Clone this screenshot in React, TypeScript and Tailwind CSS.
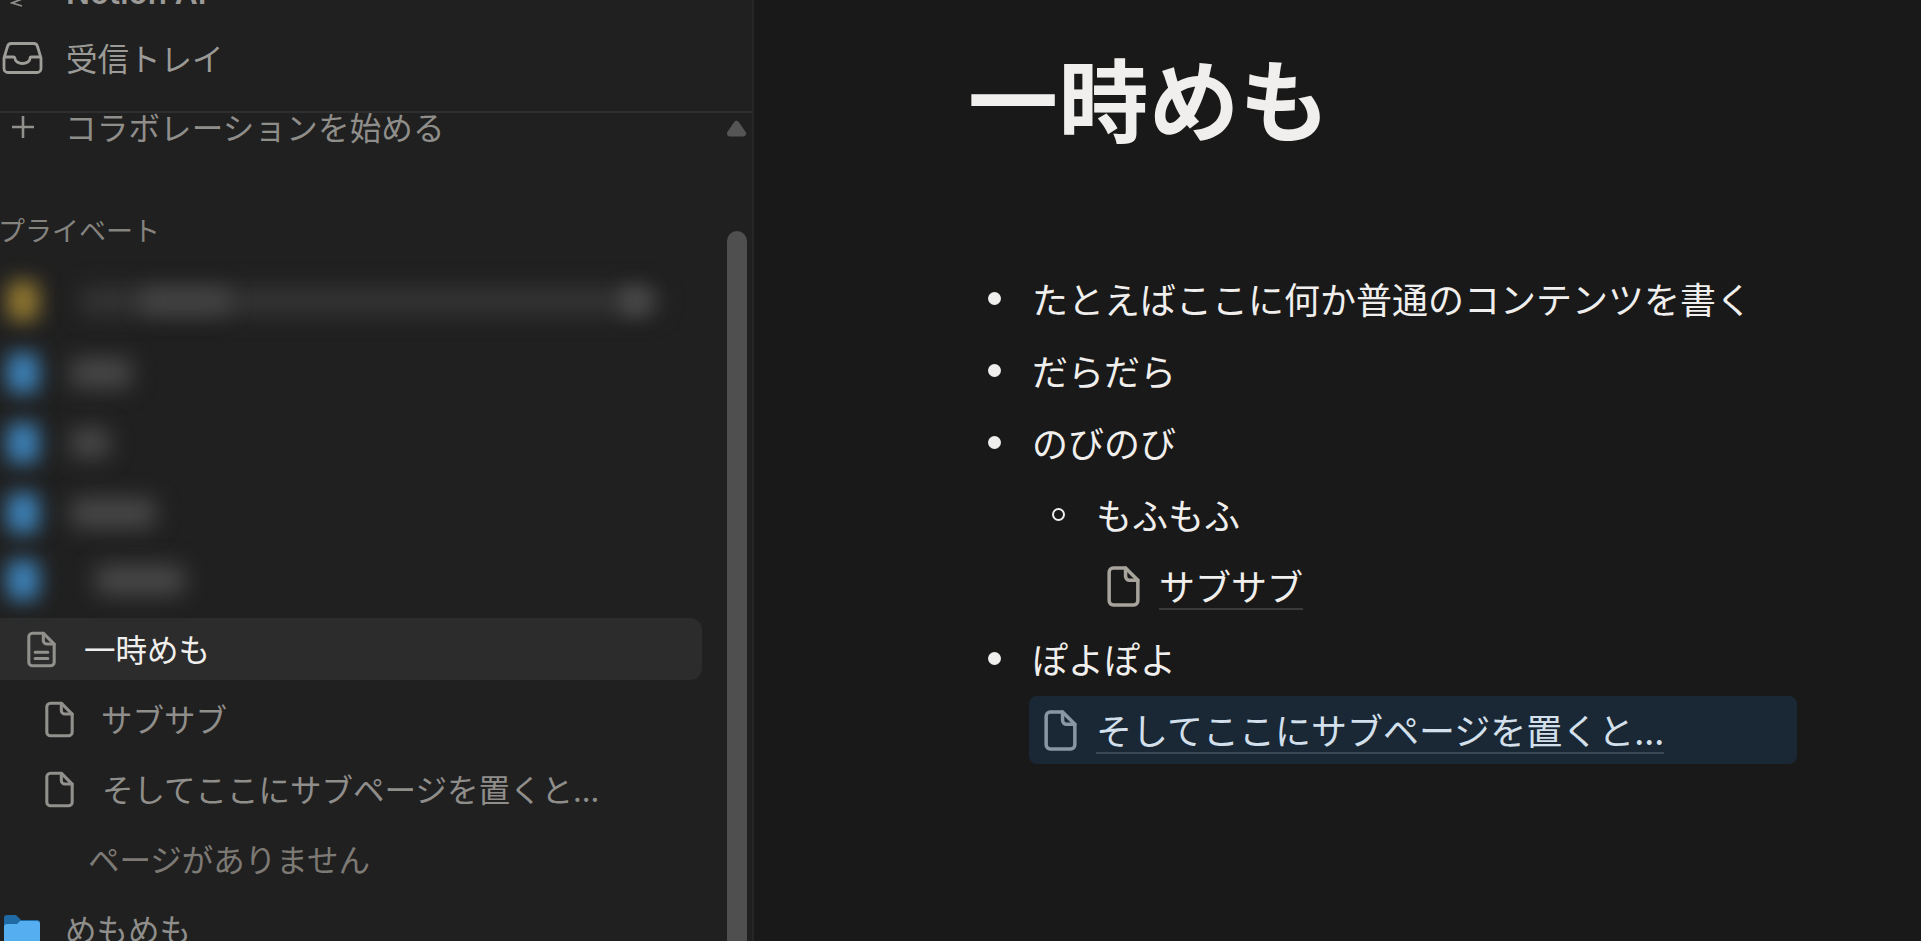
import type { ReactNode } from 'react'

const font = { fontFamily: '"Noto Sans CJK JP", "Liberation Sans", sans-serif' }

function DocIcon({ lines, className }: { lines?: boolean; className: string }) {
    return (
        <svg viewBox="0 0 16 20" fill="none" stroke="currentColor" strokeWidth="1.7" strokeLinejoin="round" strokeLinecap="round" className={className}>
            <path d="M3 1h6l6 6v10a2 2 0 0 1-2 2H3a2 2 0 0 1-2-2V3a2 2 0 0 1 2-2z" />
            <path d="M9 1v4a2 2 0 0 0 2 2h4" />
            {lines && <path d="M4.500 11.500h7M4.500 15h7" />}
        </svg>
    )
}

function BlurRow({ color, className, children }: { color: string; className?: string; children: ReactNode }) {
    return (
        <div className={`h-[70px] shrink-0 flex items-center relative ${className ?? ''}`}>
            <div className={`absolute left-[7px] w-[32px] h-[40px] rounded-lg blur-[10px] ${color}`} />
            {children}
        </div>
    )
}

function Bullet({ children }: { children: string }) {
    return (
        <div className="h-[72px] shrink-0 flex items-center">
            <div className="w-[13px] h-[13px] rounded-full bg-[#f0efed] ml-[-44px] mr-[31px]" />
            <span className="text-[36px] text-[#f0efed]">{children}</span>
        </div>
    )
}

export default function App() {
    return (
        <div style={font} className="flex h-screen w-full overflow-hidden bg-[#191919]">
            <div className="relative w-[754px] shrink-0 flex flex-col bg-[#202020] border-r-2 border-[#262626] overflow-hidden">
                <div className="h-[113px] shrink-0 flex flex-col justify-end pb-[18px] border-b-2 border-[#2f2f2f] overflow-hidden">
                    <div className="h-[70px] shrink-0 mb-[-5px] flex items-center pl-[66px] relative text-[31.5px] text-[#9b9a97]">
                        <svg viewBox="0 0 16 8" fill="none" stroke="#91908c" strokeWidth="1.8" className="absolute left-[10px] bottom-[21px] w-[16px] h-[8px]">
                            <path d="M12 0L2 4l10 3" />
                        </svg>
                        <span className="font-semibold" style={{ fontFamily: 'Inter, sans-serif' }}>Notion AI</span>
                    </div>
                    <div className="h-[70px] shrink-0 flex items-center relative text-[31.5px] text-[#9b9a97]">
                        <svg viewBox="0 0 40 32" fill="none" stroke="#a09e99" strokeWidth="2.8" strokeLinejoin="round" className="w-[41px] h-[32px] ml-[2px] mr-[23px]">
                            <path d="M9 1.500h22a4 4 0 0 1 4 3L38.500 16v10.500a4 4 0 0 1-4 4h-29a4 4 0 0 1-4-4V16L5 4.500a4 4 0 0 1 4-3z" />
                            <path d="M1.500 15H11a1.500 1.500 0 0 1 1.500 1.500 7.500 5 0 0 0 15 0A1.500 1.500 0 0 1 29 15h9.500" />
                        </svg>
                        <span>受信トレイ</span>
                    </div>
                </div>

                <div className="flex-1 flex flex-col overflow-hidden text-[31.5px] text-[#9b9a97]">
                    <div className="h-[70px] shrink-0 mt-[-21px] flex items-center relative">
                        <svg viewBox="0 0 24 24" fill="none" stroke="#91908c" strokeWidth="2.6" className="w-[24px] h-[24px] ml-[11px] mr-[30px]">
                            <path d="M12 1v22M1 12h22" />
                        </svg>
                        <span className="text-[#8f8e8b] tracking-[0.2px]">コラボレーションを始める</span>
                    </div>
                    <div className="h-[70px] shrink-0 mt-[33px] mb-[-1px] flex items-center text-[27px] text-[#85837f]">
                        <span className="ml-[-2px]">プライベート</span>
                    </div>
                    <BlurRow color="bg-[#8f7630]" className="mt-[2px]">
                        <div className="absolute left-[80px] w-[580px] h-[28px] rounded-lg blur-[11px] bg-[#343434]" />
                        <div className="absolute left-[140px] w-[90px] h-[26px] rounded-lg blur-[10px] bg-[#424242]" />
                        <div className="absolute left-[620px] w-[30px] h-[28px] rounded-lg blur-[9px] bg-[#484848]" />
                    </BlurRow>
                    <BlurRow color="bg-[#3d82b8]" className="mt-[2px]">
                        <div className="absolute left-[70px] w-[62px] h-[30px] rounded-lg blur-[11px] bg-[#484848]" />
                    </BlurRow>
                    <BlurRow color="bg-[#3d82b8]">
                        <div className="absolute left-[70px] w-[40px] h-[30px] rounded-lg blur-[11px] bg-[#484848]" />
                    </BlurRow>
                    <BlurRow color="bg-[#3d82b8]">
                        <div className="absolute left-[70px] w-[86px] h-[30px] rounded-lg blur-[11px] bg-[#484848]" />
                    </BlurRow>
                    <BlurRow color="bg-[#3d82b8]" className="mt-[-3px]">
                        <div className="absolute left-[95px] w-[90px] h-[30px] rounded-lg blur-[11px] bg-[#484848]" />
                    </BlurRow>
                    <div className="h-[70px] shrink-0 mt-[-1px] flex items-center">
                        <div className="w-[702px] h-[62px] rounded-r-xl bg-[#2c2c2c] flex items-center text-[#f0efed]">
                            <DocIcon lines className="w-[29px] h-[37px] ml-[27px] mr-[28px] text-[#91908c]" />
                            <span>一時めも</span>
                        </div>
                    </div>
                    <div className="h-[70px] shrink-0 flex items-center">
                        <DocIcon className="w-[29px] h-[37px] ml-[45px] mr-[27px] text-[#91908c]" />
                        <span className="text-[#8f8e8b]">サブサブ</span>
                    </div>
                    <div className="h-[70px] shrink-0 flex items-center">
                        <DocIcon className="w-[29px] h-[37px] ml-[45px] mr-[28px] text-[#91908c]" />
                        <span className="text-[#8f8e8b]">そしてここにサブページを置くと...</span>
                    </div>
                    <div className="h-[70px] shrink-0 flex items-center pl-[88px] text-[#7d7a75]">ページがありません</div>
                    <div className="h-[70px] shrink-0 flex items-center">
                        <svg viewBox="0 0 36 32" className="w-[36px] h-[32px] ml-[4px] mr-[25px] mt-[4px]">
                            <path d="M0 3a3 3 0 0 1 3-3h9l5 5h16a3 3 0 0 1 3 3v4H0z" fill="#1f6aa5" />
                            <path d="M0 12a3 3 0 0 1 3-3h10l3-3h17a3 3 0 0 1 3 3v23H0z" fill="#55aef0" />
                        </svg>
                        <span className="text-[#8f8e8b]">めもめも</span>
                    </div>
                </div>

                <svg viewBox="0 0 21 17" className="absolute left-[726px] top-[120px] w-[21px] h-[17px]">
                    <path d="M10.500 4L17 13.500H4z" fill="#555555" stroke="#555555" strokeWidth="6" strokeLinejoin="round" />
                </svg>
                <div className="absolute left-[727px] top-[231px] bottom-0 w-[20px] rounded-t-full bg-[#4f4f4f]" />
            </div>

            <div className="flex-1 pl-[278px]">
                <h1 className="text-[90px] leading-[120px] font-bold text-[#f0efed] mt-[36px] ml-[-64px] tracking-[0.5px]">一時めも</h1>
                <div className="mt-[106px]">
                    <Bullet>たとえばここに何か普通のコンテンツを書く</Bullet>
                    <Bullet>だらだら</Bullet>
                    <Bullet>のびのび</Bullet>
                    <div className="h-[72px] shrink-0 flex items-center">
                        <div className="w-[13px] h-[13px] rounded-full border-2 border-[#f0efed] ml-[20px] mr-[31px]" />
                        <span className="text-[36px] text-[#f0efed]">もふもふ</span>
                    </div>
                    <div className="h-[72px] shrink-0 flex items-center ml-[75px]">
                        <DocIcon className="w-[33px] h-[41px] mr-[19px] text-[#a8a49c]" />
                        <span className="text-[36px] leading-[46px] text-[#f0efed] border-b-2 border-[#3a3a3a]">サブサブ</span>
                    </div>
                    <Bullet>ぽよぽよ</Bullet>
                    <div className="w-[768px] h-[68px] ml-[-3px] mt-[2px] rounded-lg bg-[#1a2735] flex items-center">
                        <DocIcon className="w-[33px] h-[41px] ml-[15px] mr-[19px] text-[#8a97a3]" />
                        <span className="text-[36px] leading-[46px] text-[#d3e0ec] border-b-2 border-[#3a4754]">そしてここにサブページを置くと...</span>
                    </div>
                </div>
            </div>
        </div>
    )
}
